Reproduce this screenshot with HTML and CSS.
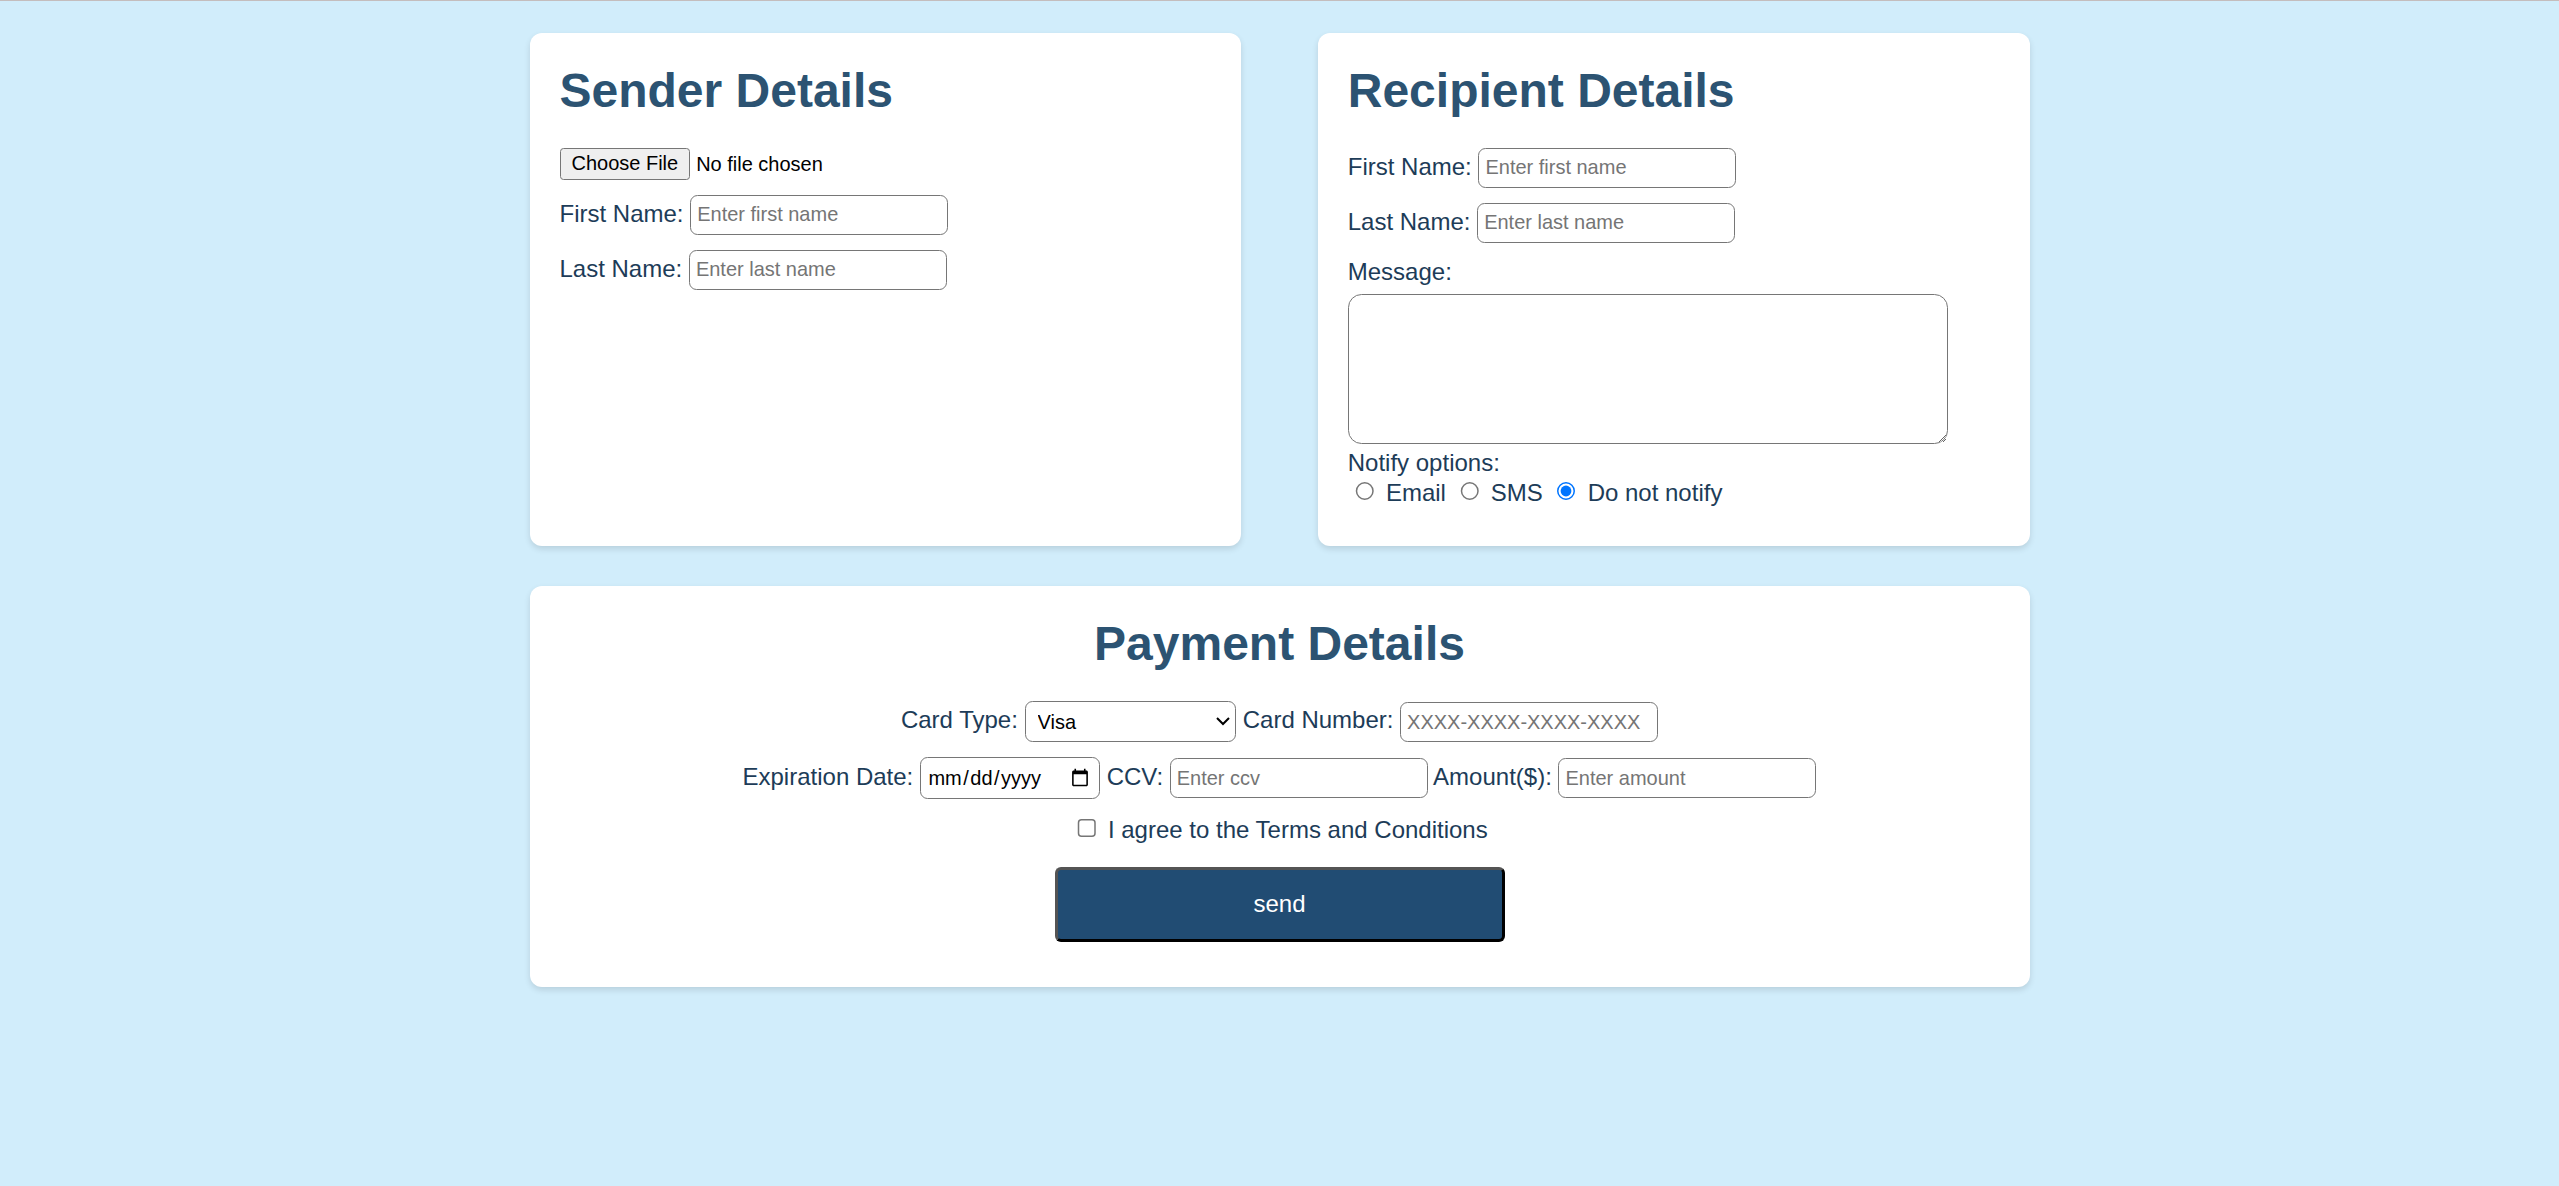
FILE: index.html
```html
<!DOCTYPE html>
<html lang="en">
<head>
<meta charset="utf-8">
<title>Send a Gift</title>
<link rel="stylesheet" href="styles.css">
</head>
<body>
<main class="page">
  <section class="card">
    <h1 class="card-title">Sender Details</h1>
    <div class="row"><input type="file" class="file-input"></div>
    <div class="row"><label class="field-label" for="s-first">First Name:</label> <input id="s-first" class="text-input" type="text" placeholder="Enter first name"></div>
    <div class="row"><label class="field-label" for="s-last">Last Name:</label> <input id="s-last" class="text-input" type="text" placeholder="Enter last name"></div>
  </section>

  <section class="card">
    <h1 class="card-title">Recipient Details</h1>
    <div class="row"><label class="field-label" for="r-first">First Name:</label> <input id="r-first" class="text-input" type="text" placeholder="Enter first name"></div>
    <div class="row"><label class="field-label" for="r-last">Last Name:</label> <input id="r-last" class="text-input" type="text" placeholder="Enter last name"></div>
    <div class="message-row">
      <label class="block-label" for="r-msg">Message:</label>
      <textarea id="r-msg" class="message"></textarea>
    </div>
    <div class="notify">
      <div class="notify-title">Notify options:</div>
      <div class="notify-options"><input type="radio" name="notify" id="n-email"> <label for="n-email">Email</label> <input type="radio" name="notify" id="n-sms"> <label for="n-sms">SMS</label> <input type="radio" name="notify" id="n-none" checked> <label for="n-none">Do not notify</label></div>
    </div>
  </section>

  <section class="card card-wide">
    <h1 class="card-title">Payment Details</h1>
    <div class="row"><label class="field-label" for="p-type">Card Type:</label> <select id="p-type" class="select-input"><option>Visa</option><option>MasterCard</option><option>American Express</option></select> <label class="field-label" for="p-num">Card Number:</label> <input id="p-num" class="text-input" type="text" placeholder="XXXX-XXXX-XXXX-XXXX"></div>
    <div class="row"><label class="field-label" for="p-exp">Expiration Date:</label> <input id="p-exp" class="date-input" type="date"> <label class="field-label" for="p-ccv">CCV:</label> <input id="p-ccv" class="text-input" type="text" placeholder="Enter ccv"> <label class="field-label" for="p-amt">Amount($):</label> <input id="p-amt" class="text-input" type="text" placeholder="Enter amount"></div>
    <div class="row"><input type="checkbox" id="p-terms"> <label for="p-terms">I agree to the Terms and Conditions</label></div>
    <div class="button-row"><button type="button" class="send-button">send</button></div>
  </section>
</main>
</body>
</html>
```

FILE: styles.css
```css
html {
  background: #d1edfb;
}

body {
  margin: 0;
  zoom: 1.5;
  border-top: 1px solid #c4bdbd;
  font-family: "Liberation Sans", Arial, sans-serif;
  font-size: 16px;
  color: #1d3c58;
}

.page {
  width: 1000px;
  margin: 21px auto 20px;
  display: grid;
  grid-template-columns: 1fr 1fr;
  column-gap: 51px;
  row-gap: 26.7px;
}

.card {
  background: #ffffff;
  border-radius: 8px;
  padding: 20px;
  box-shadow: 0 2px 4px rgba(0, 0, 0, 0.12);
}

.card-wide {
  grid-column: 1 / -1;
  text-align: center;
}

.card-title {
  margin: 0 0 20px;
  font-size: 32px;
  font-weight: bold;
  line-height: normal;
  color: #2c5372;
}

.row {
  margin-bottom: 10px;
}

.file-input {
  font: 13.333px "Liberation Sans", Arial, sans-serif;
  color: #000;
}

.text-input,
.select-input,
.date-input,
.message {
  font: 13.333px "Liberation Sans", Arial, sans-serif;
  color: #000;
  border: 1px solid #767676;
  background: #fff;
  box-sizing: border-box;
}

.text-input {
  width: 172px;
  height: 26.67px;
  padding: 4px;
  border-radius: 5px;
}

.text-input::placeholder {
  color: #757575;
}

.select-input {
  width: 141px;
  height: 27px;
  padding: 4px;
  border-radius: 5px;
}

.date-input {
  width: 120px;
  height: 28px;
  padding: 4px;
  border-radius: 5px;
}

.message-row {
  margin-bottom: 3.7px;
}

.block-label {
  display: block;
  margin-bottom: 5.5px;
}

.message {
  display: block;
  width: 400px;
  height: 100px;
  padding: 4px;
  border-radius: 9px;
}

.notify {
  margin-bottom: 6px;
}

.button-row {
  margin-top: 15px;
  margin-bottom: 10px;
}

.send-button {
  width: 300px;
  height: 50px;
  box-sizing: border-box;
  background: #214c73;
  color: #ffffff;
  font: 16px "Liberation Sans", Arial, sans-serif;
  border-style: solid;
  border-width: 2px;
  border-color: #545454 #000000 #000000 #545454;
  border-radius: 4px;
  cursor: pointer;
}
```
